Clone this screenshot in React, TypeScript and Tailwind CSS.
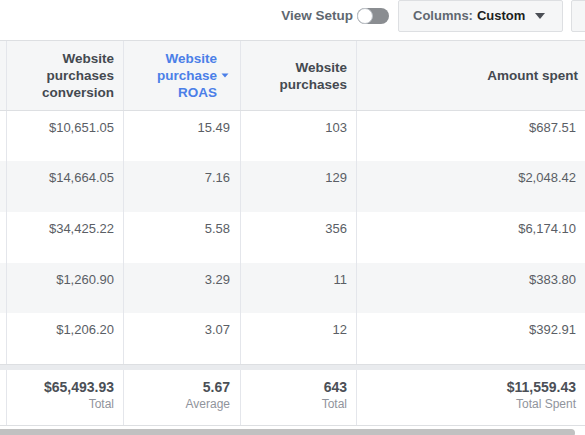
import React from "react";

const rows = [
  { a: "$10,651.05", b: "15.49", c: "103", d: "$687.51", cls: "h-[50px] bg-white" },
  { a: "$14,664.05", b: "7.16", c: "129", d: "$2,048.42", cls: "h-[51px] bg-[#f5f6f7]" },
  { a: "$34,425.22", b: "5.58", c: "356", d: "$6,174.10", cls: "h-[51px] bg-white" },
  { a: "$1,260.90", b: "3.29", c: "11", d: "$383.80", cls: "h-[50px] bg-[#f5f6f7]" },
  { a: "$1,206.20", b: "3.07", c: "12", d: "$392.91", cls: "h-[51px] bg-white" },
];

const grid = "grid grid-cols-[6px_117px_117px_116px_230px] w-[586px]";

function SortArrow() {
  return (
    <svg width="8" height="5" viewBox="0 0 8 5" className="shrink-0">
      <path d="M0.5 0.5 L7.5 0.5 L4 4.5 Z" fill="#4b7fe8" />
    </svg>
  );
}

function Caret() {
  return (
    <svg width="10" height="6" viewBox="0 0 10 6">
      <path d="M0 0 L10 0 L5 6 Z" fill="#4b4f56" />
    </svg>
  );
}

export default function App() {
  return (
    <div className="w-[585px] h-[435px] overflow-hidden bg-white font-['Liberation_Sans',Arial,sans-serif]">
      {/* Top bar */}
      <div className="flex h-[40px] items-start justify-end">
        <div className="flex h-[32px] items-center">
          <span className="text-[13.5px] font-bold text-[#606770]">View Setup</span>
          <div className="ml-[4px] relative h-[16px] w-[32px] rounded-full bg-[#8a8d91]">
            <div className="absolute left-0 top-0 h-[16px] w-[16px] rounded-full border border-[#bec3c9] bg-white" />
          </div>
        </div>
        <div className="ml-[9px] flex h-[32px] w-[165px] items-center rounded-[2px] border border-[#dddfe2] bg-[#f5f6f7] pl-[14px]">
          <span className="text-[13px] font-bold text-[#606770]">Columns:</span>
          <span className="ml-[4px] text-[13px] font-bold text-[#1c1e21]">Custom</span>
          <span className="ml-[10px] flex items-center"><Caret /></span>
        </div>
        <div className="ml-[8px] -mr-[26px] h-[32px] w-[40px] rounded-[2px] border border-[#dddfe2] bg-[#f5f6f7]" />
      </div>

      {/* Header */}
      <div className={`${grid} h-[71px] border-y border-[#dddfe2] bg-[#f5f6f7] text-[13.5px] font-bold leading-[17px] text-[#444950]`}>
        <div />
        <div className="flex items-center justify-end border-l border-[#e4e6eb] pr-[9px] text-right">
          <span>Website<br />purchases<br />conversion</span>
        </div>
        <div className="flex items-center justify-end border-l border-[#e4e6eb] pr-[11px] text-right text-[#4b7fe8]">
          <span>Website<br />purchase<br />ROAS</span>
          <span className="ml-[4px] flex items-center"><SortArrow /></span>
        </div>
        <div className="flex items-center justify-end border-l border-[#e4e6eb] pr-[9px] text-right">
          <span>Website<br />purchases</span>
        </div>
        <div className="flex items-center justify-end border-l border-[#e4e6eb] pr-[8px] text-right">
          <span>Amount spent</span>
        </div>
      </div>

      {/* Body rows */}
      {rows.map((r, i) => (
        <div key={i} className={`${grid} ${r.cls} text-[13px] leading-[16px] text-[#5a5e65]`}>
          <div />
          <div className="border-l border-[#e4e6eb] pr-[9px] pt-[9px] text-right">{r.a}</div>
          <div className="border-l border-[#e4e6eb] pr-[10px] pt-[9px] text-right">{r.b}</div>
          <div className="border-l border-[#e4e6eb] pr-[9px] pt-[9px] text-right">{r.c}</div>
          <div className="border-l border-[#e4e6eb] pr-[10px] pt-[9px] text-right">{r.d}</div>
        </div>
      ))}

      {/* Separator */}
      <div className="h-[6px] w-[586px] border-t border-[#dddfe2] bg-[#e9ebee]" />

      {/* Totals */}
      <div className={`${grid} h-[56px] border-b border-[#dddfe2] bg-white`}>
        <div />
        <div className="flex flex-col items-end border-l border-[#e4e6eb] pr-[9px] pt-[9px]">
          <span className="text-[14px] font-bold leading-[17px] text-[#4b4f56]">$65,493.93</span>
          <span className="text-[12px] leading-[16px] text-[#90949c]">Total</span>
        </div>
        <div className="flex flex-col items-end border-l border-[#e4e6eb] pr-[10px] pt-[9px]">
          <span className="text-[14px] font-bold leading-[17px] text-[#4b4f56]">5.67</span>
          <span className="text-[12px] leading-[16px] text-[#90949c]">Average</span>
        </div>
        <div className="flex flex-col items-end border-l border-[#e4e6eb] pr-[9px] pt-[9px]">
          <span className="text-[14px] font-bold leading-[17px] text-[#4b4f56]">643</span>
          <span className="text-[12px] leading-[16px] text-[#90949c]">Total</span>
        </div>
        <div className="flex flex-col items-end border-l border-[#e4e6eb] pr-[10px] pt-[9px]">
          <span className="text-[14px] font-bold leading-[17px] text-[#4b4f56]">$11,559.43</span>
          <span className="text-[12px] leading-[16px] text-[#90949c]">Total Spent</span>
        </div>
      </div>

      {/* Scrollbar */}
      <div className="mt-[3px] h-[8px] w-[575px] rounded-r-full bg-[#c1c1c1]" />
    </div>
  );
}
